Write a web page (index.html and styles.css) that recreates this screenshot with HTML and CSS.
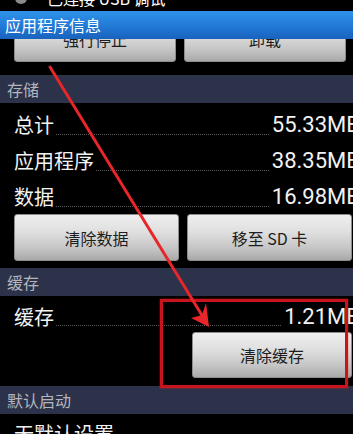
FILE: index.html
```html
<!DOCTYPE html>
<html lang="zh-CN">
<head>
<meta charset="utf-8">
<title>应用程序信息</title>
<link rel="stylesheet" href="styles.css">
</head>
<body>
<div class="screen">
  <div class="status">
    <span class="status-icon"></span>
    <span class="status-text">已连接 USB 调试</span>
  </div>
  <div class="titlebar">应用程序信息</div>
  <div class="top-buttons">
    <div class="btn">强行停止</div>
    <div class="btn">卸载</div>
  </div>
  <div class="section">存储</div>
  <div class="rows">
    <div class="row"><span class="label">总计</span><span class="dots"></span><span class="value">55.33MB</span></div>
    <div class="row"><span class="label">应用程序</span><span class="dots"></span><span class="value">38.35MB</span></div>
    <div class="row"><span class="label">数据</span><span class="dots"></span><span class="value">16.98MB</span></div>
  </div>
  <div class="btn-row">
    <div class="btn">清除数据</div>
    <div class="btn">移至 SD 卡</div>
  </div>
  <div class="section">缓存</div>
  <div class="cache-row row"><span class="label">缓存</span><span class="dots"></span><span class="value">1.21MB</span></div>
  <div class="btn-row single">
    <div class="btn">清除缓存</div>
  </div>
  <div class="section">默认启动</div>
  <div class="plain-row">无默认设置</div>

  <div class="highlight"></div>
  <svg class="arrow" width="353" height="434" viewBox="0 0 353 434">
    <line x1="50" y1="67" x2="203" y2="317" stroke="#e8262a" stroke-width="3" stroke-linecap="round"/>
    <polygon points="209,327 191,318 202,315 206,303" fill="#e8262a"/>
  </svg>
</div>
</body>
</html>
```
FILE: styles.css
```css
html, body {
  margin: 0;
  padding: 0;
  background: #ffffff;
}
.screen {
  position: relative;
  width: 353px;
  height: 434px;
  overflow: hidden;
  background: #000;
  font-family: Roboto, "Noto Sans CJK SC", sans-serif;
  color: #f2f2f2;
}
.status {
  height: 11px;
  overflow: hidden;
  display: flex;
  align-items: flex-end;
  background: #000;
}
.status-icon {
  width: 12px;
  height: 12px;
  border-radius: 50%;
  background: #8a8a8a;
  margin-left: 15px;
  margin-bottom: 7px;
  flex: none;
}
.status-text {
  font-family: "Noto Sans CJK SC", sans-serif;
  font-size: 16px;
  line-height: 16px;
  color: #fff;
  margin-left: 20px;
  margin-bottom: 5px;
  white-space: nowrap;
}
.titlebar {
  height: 28px;
  line-height: 28px;
  padding-left: 5px;
  font-family: "Noto Sans CJK SC", sans-serif;
  font-size: 16px;
  color: #fff;
  background: linear-gradient(#2f93ea, #2279d6 55%, #1862bd);
}
.top-buttons {
  height: 36px;
  overflow: hidden;
  display: flex;
  gap: 8px;
  padding: 0 7px 0 14px;
}
.top-buttons .btn {
  width: 162px;
  height: 46px;
  margin-top: -23px;
}
.btn {
  box-sizing: border-box;
  display: flex;
  align-items: center;
  justify-content: center;
  border-radius: 3px;
  border: 1px solid #8c8c8c;
  background: linear-gradient(#efefef, #dedede 40%, #c4c4c4 75%, #a9a9a9);
  color: #1e1e1e;
  font-family: "Noto Sans CJK SC", sans-serif;
  font-size: 16px;
  white-space: nowrap;
}
.section {
  height: 28px;
  line-height: 28px;
  padding-left: 7px;
  background: #2c3249;
  color: #b4b6bf;
  font-family: "Noto Sans CJK SC", sans-serif;
  font-size: 16px;
}
.rows {
  padding-top: 4px;
}
.row {
  height: 36px;
  display: flex;
  align-items: flex-end;
  padding-left: 14px;
}
.label {
  font-family: "Noto Sans CJK SC", sans-serif;
  font-size: 20px;
  line-height: 36px;
  white-space: nowrap;
}
.dots {
  flex: 1;
  border-bottom: 1px dotted #5a5a5a;
  margin: 0 3px 8px 2px;
}
.value {
  font-family: Roboto, sans-serif;
  font-size: 22px;
  line-height: 36px;
  margin-right: -7px;
  white-space: nowrap;
}
.btn-row {
  display: flex;
  gap: 8px;
  padding: 0 0 7px 14px;
  margin-top: -1px;
}
.btn-row .btn {
  width: 165px;
  height: 47px;
}
.cache-row {
  height: 30px;
  margin-top: 6px;
}
.cache-row .label,
.cache-row .value {
  line-height: 30px;
}
.cache-row .dots {
  margin-bottom: 6px;
}
.btn-row.single {
  justify-content: flex-end;
  padding: 0 1px 8px 0;
  margin-top: 0;
}
.btn-row.single .btn {
  width: 160px;
  height: 46px;
}
.plain-row {
  padding: 6px 0 0 14px;
  font-family: "Noto Sans CJK SC", sans-serif;
  font-size: 20px;
  line-height: 28px;
}
.highlight {
  position: absolute;
  left: 160px;
  top: 299px;
  width: 182px;
  height: 83px;
  border: 3px solid #c8141c;
  box-shadow: 0 0 2px rgba(255, 40, 40, 0.6);
}
.arrow {
  position: absolute;
  left: 0;
  top: 0;
}
```
